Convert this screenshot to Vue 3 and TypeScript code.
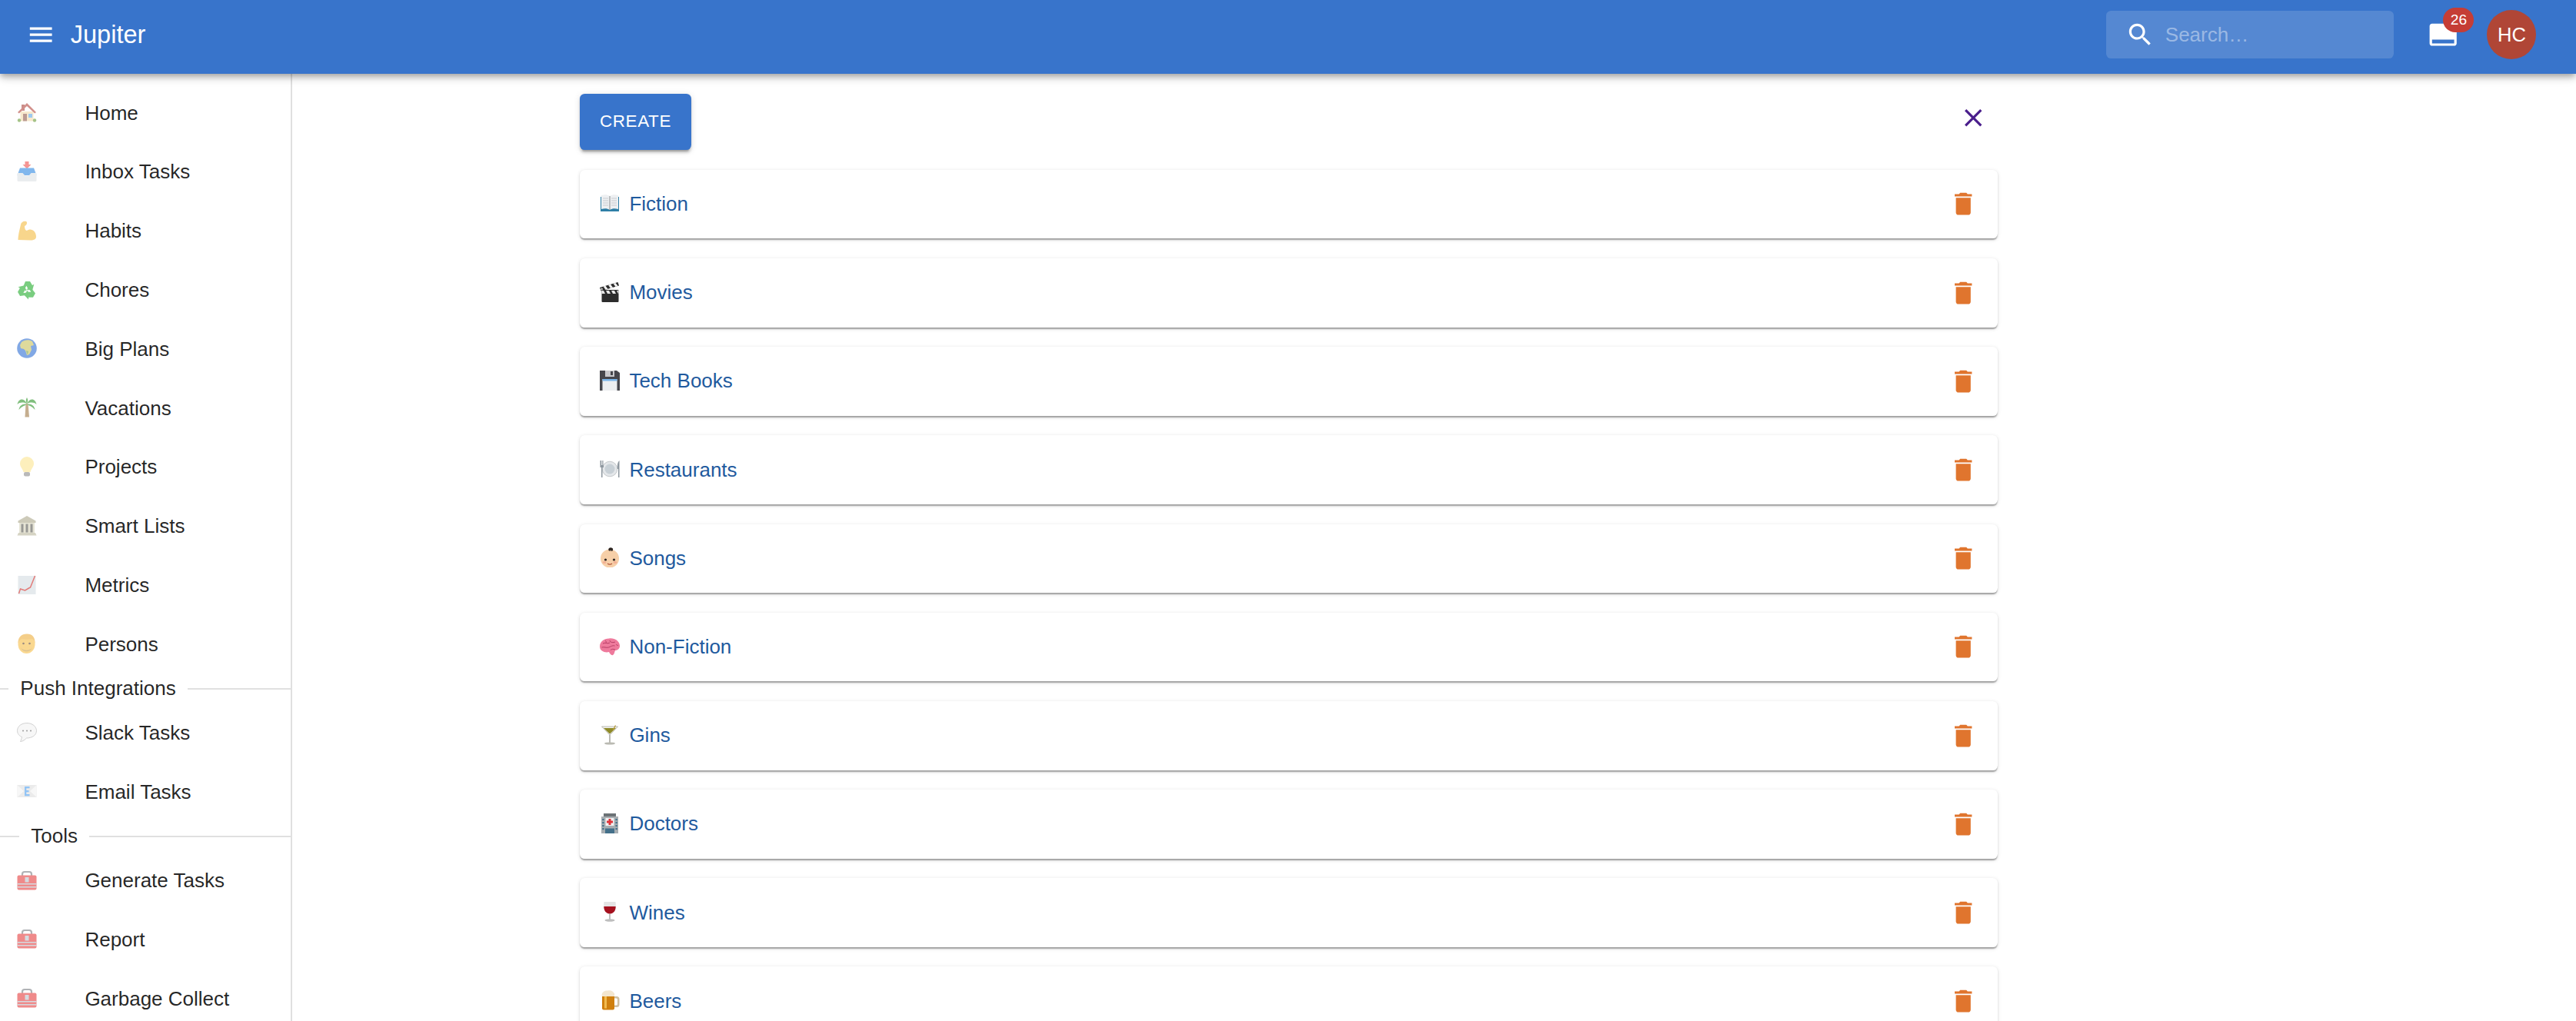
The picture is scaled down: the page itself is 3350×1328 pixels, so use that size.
<script setup lang="ts">
const art: Record<string, string> = {
  home: `<rect x="6" y="3" width="4" height="8" fill="#a8443c"/><rect x="4.500" y="12" width="17" height="12.500" fill="#f2dcae"/><path d="M13 1 1 13l1.800 1.600L13 5l10.200 9.600L25 13z" fill="#b5473f"/><rect x="8" y="15" width="5" height="9.500" fill="#8e5a4c"/><rect x="15" y="15" width="5" height="5" fill="#5ea6e6"/><circle cx="3" cy="23.500" r="2.200" fill="#6a9c3a"/><circle cx="23" cy="23.500" r="2.200" fill="#6a9c3a"/>`,
  inbox: `<path d="M10.500 0h5v4h3L13 9.500 7.500 4h3z" fill="#f0504c"/><path d="M4 8.500h18L25.500 18H.5z" fill="#2f88e2"/><path d="M.5 15h7l3 3.500h5l3-3.500h7v9.500A1.500 1.500 0 0 1 24 26H2a1.500 1.500 0 0 1-1.500-1.500z" fill="#dde2e6"/>`,
  muscle: `<path d="M1.500 25C1.500 18 4 10 5 5 5.500 2 9 0 12 1c2 1 1 5-2 6 0 3 1 6 3 6 5-4 12 0 12 8 0 3-3 4.500-7 4.500z" fill="#f5bc40"/>`,
  recycle: `<g fill="#22ac2c"><path d="M7.500 10.500 11 2h6l3 5 2.300-1.200-2.300 8-8-1.300 2.300-1.300-2-3.400-2.500 4.500z"/><path d="M7.500 10.500 11 2h6l3 5 2.300-1.200-2.300 8-8-1.300 2.300-1.300-2-3.400-2.500 4.500z" transform="rotate(120 13 13.500)"/><path d="M7.500 10.500 11 2h6l3 5 2.300-1.200-2.300 8-8-1.300 2.300-1.300-2-3.400-2.500 4.500z" transform="rotate(240 13 13.500)"/></g>`,
  globe: `<circle cx="13" cy="13" r="12.800" fill="#2f6fd4"/><path d="M6 5c3-3 10-4 14-1l2 5-4 1 1 5-3 6-3 1-2-6-2-2-4-1-1-4z" fill="#c9c25c"/><path d="M12 16l3 1-1 4-1-1z" fill="#6fa04a"/>`,
  palm: `<path d="M11.500 8h3l1.500 17.500h-5.500z" fill="#a07a45"/><path d="M13 8C9 0 2 1 .5 9 4 6 8 6 13 8zM13 8c4-8 11-7 12.500 1C22 6 18 6 13 8zM13 9C9 7 3 10 2.500 16 6 12 9 11 13 9zM13 9c4-2 10 1 10.500 7C20 12 17 11 13 9zM13 8c-2-4-1-6 0-8 1 2 2 4 0 8z" fill="#2f962a"/>`,
  bulb: `<path d="M13 0a9 9 0 0 0-9 9c0 4.500 3.500 6.500 4.500 11h9c1-4.500 4.500-6.500 4.500-11a9 9 0 0 0-9-9z" fill="#fde690"/><rect x="9" y="20" width="8" height="5.500" rx="2" fill="#8c8c8c"/>`,
  temple: `<path d="M13 0 1.500 6.500V9h23V6.500z" fill="#aca88c"/><rect x="3" y="9" width="20" height="13" fill="#d6d3ba"/><g fill="#55554e"><rect x="5.500" y="10.500" width="3" height="11"/><rect x="11.500" y="10.500" width="3" height="11"/><rect x="17.500" y="10.500" width="3" height="11"/></g><path d="M2 22h22l1.500 3.500H.5z" fill="#bcb89e"/>`,
  chart: `<rect x="1.500" y="1" width="23" height="24" fill="#d4dde2"/><path d="M2.500 24l2-6 6 2 5-3 2-1 6-15" fill="none" stroke="#d02420" stroke-width="1.500"/>`,
  person: `<ellipse cx="12.500" cy="14" rx="11" ry="12" fill="#f7bf48"/><path d="M1.500 13C1 5 6 .5 13 .5s11 4.500 10.500 12.500c-1-4-2-6-4-6-4 1-9 1-13 0-2 1-4 2-5 6z" fill="#eeae3c"/><circle cx="8.500" cy="13" r="1.300" fill="#5a4030"/><circle cx="16.500" cy="13" r="1.300" fill="#5a4030"/><path d="M5 18c2 5 13 5 15 0-2 7-13 7-15 0z" fill="#c69a4a"/>`,
  speech: `<path d="M13 .5C6 .5.500 4.500.5 10.500c0 4 3 7 6 8-.500 2.500-1.500 5-2 6 3 0 6-2.500 8-4.500 7.500 0 13-4 13-9.500S20 .5 13 .5z" fill="#f2f2f2" stroke="#adadad" stroke-width=".9"/><g fill="#5c5c5c"><circle cx="8" cy="10.500" r="1"/><circle cx="13" cy="10.500" r="1"/><circle cx="18" cy="10.500" r="1"/></g>`,
  mail: `<rect x=".5" y="5" width="25" height="16" fill="#dedede"/><path d="M.5 5 9 13 .5 21zM25.500 5 17 13l8.500 8z" fill="#f2f2f2"/><g fill="#4a9df0"><rect x="10" y="7" width="6.500" height="2.300"/><rect x="10" y="12" width="5.500" height="2.300"/><rect x="10" y="17" width="6.500" height="2.300"/><rect x="10" y="7" width="2.300" height="12"/></g>`,
  tool: `<path d="M7 9V5a3 3 0 0 1 3-3h6a3 3 0 0 1 3 3v4" fill="none" stroke="#7c7f84" stroke-width="2.200"/><rect x=".5" y="6.500" width="25" height="19" rx="2" fill="#e53e3e"/><g fill="#bcc4cc"><rect x=".5" y="17" width="25" height="1.500"/><rect x=".5" y="21" width="25" height="1.500"/><rect x="10.500" y="9" width="5" height="6.500"/></g>`,
  book: `<rect x="1" y="4" width="24" height="19" fill="#2f7fa6"/><path d="M2 2c4-1 8-1 11 1 3-2 7-2 11-1v18c-4-1-8-1-11 1-3-2-7-2-11-1z" fill="#eef0f2"/><path d="M13 3v18" stroke="#8a8d90"/><g stroke="#b9bcc2" stroke-width=".7"><path d="M4 6h7M4 9h7M4 12h7M4 15h7M15 6h7M15 9h7M15 12h7M15 15h7"/></g>`,
  clapper: `<rect x="2.500" y="10" width="22" height="16" rx="1" fill="#2c2c2c"/><path d="M0 7 23.500 0 25 4.500 1.500 11.500z" fill="#2c2c2c"/><path d="M4.500 5.600l3 4.200 3-.9-3-4.200zM11 3.700l3 4.200 3-.9-3-4.200zM17.500 1.800l3 4.200 3-.9-3-4.200z" fill="#f2f2f2"/><rect x="2.500" y="11" width="22" height="4" fill="#e8e8e8"/><path d="M5 11l2 4h3l-2-4zM12 11l2 4h3l-2-4zM19 11l2 4h3l-2-4z" fill="#2c2c2c"/><circle cx="2.500" cy="9" r="1.500" fill="#b8b8b8"/>`,
  floppy: `<path d="M0 0h22l4 3v23H0z" fill="#46464c"/><rect x="7" y="0" width="12" height="8" fill="#c8c8cc"/><rect x="14" y="1" width="3" height="5" fill="#46464c"/><rect x="3.500" y="11" width="19" height="15" fill="#eceef0"/><rect x="3.500" y="11" width="19" height="2.500" fill="#78b4ea"/>`,
  plate: `<circle cx="13" cy="13" r="9.800" fill="#e4e7ea" stroke="#a8acb0" stroke-width=".6"/><circle cx="13" cy="13" r="6.500" fill="#c8d0d6"/><path d="M.5 2v9h1.500v13h1.500V11h1.500V2H4.500v6H3.700V2H2.800v6H2V2z" fill="#8f98a0"/><path d="M25.500 2C23 4 22.500 9 23 13h1v11h1.500z" fill="#8f98a0"/>`,
  baby: `<circle cx="13" cy="14.500" r="12" fill="#f6cfa8"/><path d="M11.500 4c-1-3 2-5 5-3 1.500 2 0 4-1.500 4 0-2-2-2-1 0z" fill="#2c2420"/><circle cx="7.500" cy="16" r="1.600" fill="#2c2420"/><circle cx="18.500" cy="16" r="1.600" fill="#2c2420"/><path d="M10 21c2 1.500 4 1.500 6 0" stroke="#b4583c" stroke-width="1.300" fill="none"/><ellipse cx="6" cy="19.500" rx="2.500" ry="1.500" fill="#f2b094"/><ellipse cx="20" cy="19.500" rx="2.500" ry="1.500" fill="#f2b094"/>`,
  brain: `<path d="M0 13C0 7 5 2.500 12 2.500c7-1 13.500 3 14 9 .500 4-3 6.500-6 6.500-1 2-1 5-3 6-2 1-4-2-5-4C7 21.500 0 19 0 13z" fill="#ee7a9c"/><path d="M4 9c3-2 6 1 9-1M13 5c0 3 5 3 7 2M2.500 14c3-1 6 1 9 0s5-3 8-2M20 17c-3-1-4-1-6 .500M7 5c1 1 2 2 1 3M21 10c1 1 2 2 3 1" stroke="#b83e66" stroke-width="1" fill="none"/>`,
  martini: `<path d="M2.500 2h21L13 13z" fill="#f0f0ec" stroke="#a0a098" stroke-width=".7"/><path d="M5 4h16L13 11.500z" fill="#8e8a28"/><path d="M17 7 20.500.5" stroke="#b89a3a" stroke-width="1.300"/><rect x="12.200" y="13" width="1.600" height="10" fill="#aaaaa2"/><ellipse cx="13" cy="24" rx="7" ry="1.600" fill="#babab2"/>`,
  hospital: `<rect x="2" y="4" width="22" height="22" fill="#a8aeb2"/><rect x="5" y="0" width="16" height="4" fill="#6c7276"/><rect x="7.500" y="6" width="11" height="10" fill="#f2f2f2"/><path d="M11.500 7h3v2.500H17v3h-2.500V15h-3v-2.500H9v-3h2.500z" fill="#e0343a"/><rect x="7" y="19.500" width="12" height="6.500" fill="#44708a"/><g fill="#44708a"><rect x="3.300" y="7" width="2.200" height="2.200"/><rect x="3.300" y="11" width="2.200" height="2.200"/><rect x="3.300" y="15" width="2.200" height="2.200"/><rect x="3.300" y="19" width="2.200" height="2.200"/><rect x="20.500" y="7" width="2.200" height="2.200"/><rect x="20.500" y="11" width="2.200" height="2.200"/><rect x="20.500" y="15" width="2.200" height="2.200"/><rect x="20.500" y="19" width="2.200" height="2.200"/></g>`,
  wine: `<path d="M5.500 0h15c1 8 0 15-7.500 16C6 15 4.500 8 5.500 0z" fill="#e4e4e4"/><path d="M5.300 6h15.400c0 5-2 9-7.700 9.500C7.300 15 5.300 11 5.300 6z" fill="#a5101e"/><rect x="12.200" y="16" width="1.600" height="7" fill="#aeaeae"/><ellipse cx="13" cy="24" rx="6.500" ry="1.700" fill="#bebebe"/>`,
  beer: `<rect x="3" y="4" width="16" height="21.500" rx="2" fill="#d0800f"/><rect x="6" y="8" width="3" height="15.500" fill="#f2bc50"/><path d="M19 8h3a3.500 3.500 0 0 1 3.500 3.500v7A3.500 3.500 0 0 1 22 22h-3v-2.500h2.500a1.500 1.500 0 0 0 1.500-1.500v-6a1.500 1.500 0 0 0-1.500-1.500H19z" fill="#cfc0a4"/><path d="M3 8C1.500 4 5 0 10 .5c4-1 9 1 9 5.500v2H3z" fill="#f3e6cf"/>`,
}

const nav1 = [
  { icon: 'home', label: 'Home' }, { icon: 'inbox', label: 'Inbox Tasks' },
  { icon: 'muscle', label: 'Habits' }, { icon: 'recycle', label: 'Chores' },
  { icon: 'globe', label: 'Big Plans' }, { icon: 'palm', label: 'Vacations' },
  { icon: 'bulb', label: 'Projects' }, { icon: 'temple', label: 'Smart Lists' },
  { icon: 'chart', label: 'Metrics' }, { icon: 'person', label: 'Persons' },
]
const nav2 = [{ icon: 'speech', label: 'Slack Tasks' }, { icon: 'mail', label: 'Email Tasks' }]
const nav3 = [
  { icon: 'tool', label: 'Generate Tasks' }, { icon: 'tool', label: 'Report' },
  { icon: 'tool', label: 'Garbage Collect' },
]
const lists = [
  { icon: 'book', label: 'Fiction' }, { icon: 'clapper', label: 'Movies' },
  { icon: 'floppy', label: 'Tech Books' }, { icon: 'plate', label: 'Restaurants' },
  { icon: 'baby', label: 'Songs' }, { icon: 'brain', label: 'Non-Fiction' },
  { icon: 'martini', label: 'Gins' }, { icon: 'hospital', label: 'Doctors' },
  { icon: 'wine', label: 'Wines' }, { icon: 'beer', label: 'Beers' },
]
</script>

<template>
  <div class="page">
    <header class="appbar">
      <div class="toolbar">
        <svg class="mi menu" viewBox="0 0 24 24"><path d="M3 18h18v-2H3v2zm0-5h18v-2H3v2zm0-7v2h18V6H3z" /></svg>
        <span class="brand">Jupiter</span>
        <div class="search">
          <svg class="mi" viewBox="0 0 24 24"><path d="M15.500 14h-.79l-.28-.27C15.410 12.590 16 11.110 16 9.500 16 5.910 13.090 3 9.500 3S3 5.910 3 9.500 5.910 16 9.500 16c1.610 0 3.090-.59 4.230-1.570l.27.28v.79l5 4.990L20.490 19l-4.990-5zm-6 0C7.010 14 5 11.990 5 9.500S7.010 5 9.500 5 14 7.010 14 9.500 11.990 14 9.500 14z" /></svg>
          <span class="placeholder">Search…</span>
        </div>
        <div class="notif">
          <svg class="mi" viewBox="0 0 24 24"><path d="M21 3H3c-1.100 0-2 .9-2 2v14c0 1.100.9 2 2 2h18c1.100 0 2-.9 2-2V5c0-1.100-.9-2-2-2zm0 16H3v-3h18v3z" /></svg>
          <span class="badge">26</span>
        </div>
        <div class="avatar">HC</div>
      </div>
    </header>

    <div class="body">
      <aside class="sidebar">
        <nav class="group first">
          <a v-for="n in nav1" :key="n.label" class="nav-item">
            <span class="nav-icon"><svg class="emoji" viewBox="0 0 26 26" v-html="art[n.icon]"></svg></span>
            <span>{{ n.label }}</span>
          </a>
        </nav>
        <div class="section"><i class="rule lead-push"></i><span class="section-text">Push Integrations</span><i class="rule grow"></i></div>
        <nav class="group">
          <a v-for="n in nav2" :key="n.label" class="nav-item">
            <span class="nav-icon"><svg class="emoji" viewBox="0 0 26 26" v-html="art[n.icon]"></svg></span>
            <span>{{ n.label }}</span>
          </a>
        </nav>
        <div class="section"><i class="rule lead-tools"></i><span class="section-text">Tools</span><i class="rule grow"></i></div>
        <nav class="group">
          <a v-for="n in nav3" :key="n.label" class="nav-item">
            <span class="nav-icon"><svg class="emoji" viewBox="0 0 26 26" v-html="art[n.icon]"></svg></span>
            <span>{{ n.label }}</span>
          </a>
        </nav>
      </aside>

      <main class="main">
        <div class="column">
          <div class="actions">
            <button class="create">Create</button>
            <button class="close" aria-label="Close">
              <svg class="mi" viewBox="0 0 24 24"><path d="M19 6.410 17.590 5 12 10.590 6.410 5 5 6.410 10.590 12 5 17.590 6.410 19 12 13.410 17.590 19 19 17.590 13.410 12z" /></svg>
            </button>
          </div>
          <div v-for="l in lists" :key="l.label" class="card">
            <svg class="emoji" viewBox="0 0 26 26" v-html="art[l.icon]"></svg>
            <a class="link">{{ l.label }}</a>
            <svg class="mi trash" viewBox="0 0 24 24"><path d="M6 19c0 1.100.9 2 2 2h8c1.100 0 2-.9 2-2V7H6v12zM19 4h-3.500l-1-1h-5l-1 1H5v2h14V4z" /></svg>
          </div>
        </div>
      </main>
    </div>
  </div>
</template>

<style scoped>
.page {
  height: 1328px;
  overflow: hidden;
  background: #fff;
  font-family: "Liberation Sans", Arial, sans-serif;
  font-size: 26px;
  color: rgba(0, 0, 0, 0.87);
}
.mi {
  width: 38.4px;
  height: 38.4px;
  flex: none;
  fill: currentColor;
  display: block;
}
.appbar {
  position: relative;
  z-index: 2;
  height: 96px;
  background: #3874cb;
  color: #fff;
  box-shadow: 0 3.2px 6.4px -1.6px rgba(0, 0, 0, 0.2), 0 6.4px 8px 0 rgba(0, 0, 0, 0.14), 0 1.6px 16px 0 rgba(0, 0, 0, 0.12);
}
.toolbar {
  height: 90px;
  display: flex;
  align-items: center;
  padding: 0 51.600px 0 34.400px;
}
.brand {
  margin-left: 19px;
  font-size: 32.500px;
  line-height: 1;
  margin-right: auto;
}
.search {
  width: 374px;
  height: 62px;
  display: flex;
  align-items: center;
  gap: 13px;
  padding-left: 25px;
  box-sizing: border-box;
  border-radius: 6.4px;
  background: rgba(255, 255, 255, 0.15);
}
.placeholder {
  color: rgba(255, 255, 255, 0.42);
}
.notif {
  position: relative;
  margin-left: 45px;
}
.badge {
  position: absolute;
  left: 19px;
  top: -16px;
  width: 40px;
  height: 32px;
  border-radius: 16px;
  background: #c53d36;
  font-size: 19.2px;
  line-height: 32px;
  text-align: center;
}
.avatar {
  margin-left: 37.600px;
  width: 64px;
  height: 64px;
  border-radius: 50%;
  background: #b04636;
  display: flex;
  align-items: center;
  justify-content: center;
  font-size: 25.6px;
}
.body {
  display: flex;
  align-items: flex-start;
}
.sidebar {
  flex: none;
  width: 380px;
  height: 1232px;
  box-sizing: border-box;
  border-right: 2px solid #e0e0e0;
  overflow: hidden;
}
.group {
  display: flex;
  flex-direction: column;
}
.group.first {
  padding-top: 12.800px;
}
.nav-item {
  height: 76.800px;
  flex: none;
  display: flex;
  align-items: center;
  padding-left: 22.400px;
}
.nav-icon {
  width: 88px;
  flex: none;
  display: block;
}
.nav-icon .emoji {
  opacity: 0.6;
  margin-top: -2px;
}
.emoji {
  width: 26px;
  height: 26px;
  flex: none;
  display: block;
}
.section {
  height: 38.400px;
  display: flex;
  align-items: center;
}
.section-text {
  padding: 0 15.360px;
  white-space: nowrap;
}
.rule {
  height: 2px;
  background: #e0e0e0;
  display: block;
  flex: none;
}
.rule.grow {
  flex: 1;
}
.lead-push {
  width: 11px;
}
.lead-tools {
  width: 25px;
}
.main {
  flex: 1;
  min-width: 0;
  padding-left: 374px;
}
.column {
  width: 1844px;
  padding-top: 25.600px;
  display: flex;
  flex-direction: column;
  gap: 25.600px;
}
.actions {
  height: 73.600px;
  flex: none;
  display: flex;
  justify-content: space-between;
  align-items: flex-start;
}
.create {
  width: 145px;
  height: 73.600px;
  border: 0;
  padding: 0;
  border-radius: 6.4px;
  background: #3874cb;
  color: #fff;
  font-family: inherit;
  font-size: 22.400px;
  letter-spacing: 0.64px;
  text-transform: uppercase;
  box-shadow: 0 4.800px 1.600px -3.200px rgba(0, 0, 0, 0.2), 0 3.200px 3.200px 0 rgba(0, 0, 0, 0.14), 0 1.600px 8px 0 rgba(0, 0, 0, 0.12);
}
.close {
  width: 64px;
  height: 64px;
  padding: 0;
  border: 0;
  background: none;
  color: #4a1e8c;
  display: flex;
  align-items: center;
  justify-content: center;
}
.card {
  height: 89.600px;
  flex: none;
  box-sizing: border-box;
  padding: 0 25.600px;
  display: flex;
  align-items: center;
  gap: 12.800px;
  border-radius: 6.4px;
  background: #fff;
  box-shadow: 0 3.200px 1.600px -1.600px rgba(0, 0, 0, 0.2), 0 1.600px 1.600px 0 rgba(0, 0, 0, 0.14), 0 1.600px 4.800px 0 rgba(0, 0, 0, 0.12);
}
.card .emoji {
  margin-top: -2px;
}
.link {
  color: #1f5a9e;
  margin-right: auto;
}
.trash {
  color: #e0752e;
}
</style>
